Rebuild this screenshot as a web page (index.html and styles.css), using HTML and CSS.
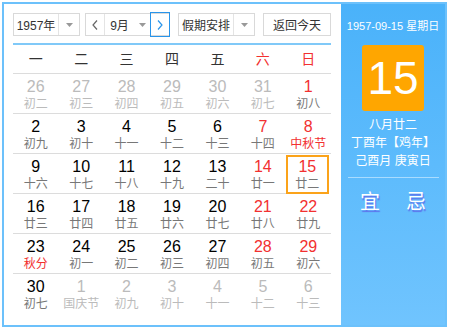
FILE: index.html
```html
<!doctype html>
<html lang="zh-CN">
  <head>
    <meta charset="UTF-8" />
    <meta name="viewport" content="width=device-width, initial-scale=1.0" />
    <title>万年历</title>
    <link rel="stylesheet" href="styles.css">
  </head>
  <body>
    <div class="calendar">
      <!-- Left: toolbar + month grid -->
      <div class="main">
        <div class="toolbar">
          <div class="select year-select">
            <span class="select-text">1957年</span>
            <span class="select-arrow"><svg width="7" height="4" viewBox="0 0 7 4"><path d="M0 0h7L3.5 4z" fill="#999"/></svg></span>
          </div>

          <div class="month-group">
            <span class="nav-btn"><svg width="6" height="10" viewBox="0 0 6 10"><polyline points="5,0.5 1,5 5,9.5" fill="none" stroke="#666" stroke-width="1.2"/></svg></span>
            <div class="month-select">
              <span class="select-text">9月</span>
              <span class="select-arrow"><svg width="7" height="4" viewBox="0 0 7 4"><path d="M0 0h7L3.5 4z" fill="#999"/></svg></span>
            </div>
            <span class="nav-btn nav-next"><svg width="6" height="10" viewBox="0 0 6 10"><polyline points="1,0.5 5,5 1,9.5" fill="none" stroke="#2a95ea" stroke-width="1.2"/></svg></span>
          </div>

          <div class="select holiday-select">
            <span class="select-text">假期安排</span>
            <span class="select-arrow"><svg width="7" height="4" viewBox="0 0 7 4"><path d="M0 0h7L3.5 4z" fill="#999"/></svg></span>
          </div>

          <button class="today-btn">返回今天</button>
        </div>

        <div class="week-head">
          <span>一</span><span>二</span><span>三</span><span>四</span><span>五</span>
          <span class="red">六</span><span class="red">日</span>
        </div>

        <div class="days">
          <div class="day other"><b>26</b><i>初二</i></div>
          <div class="day other"><b>27</b><i>初三</i></div>
          <div class="day other"><b>28</b><i>初四</i></div>
          <div class="day other"><b>29</b><i>初五</i></div>
          <div class="day other"><b>30</b><i>初六</i></div>
          <div class="day other"><b>31</b><i>初七</i></div>
          <div class="day weekend"><b>1</b><i>初八</i></div>

          <div class="day"><b>2</b><i>初九</i></div>
          <div class="day"><b>3</b><i>初十</i></div>
          <div class="day"><b>4</b><i>十一</i></div>
          <div class="day"><b>5</b><i>十二</i></div>
          <div class="day"><b>6</b><i>十三</i></div>
          <div class="day weekend"><b>7</b><i>十四</i></div>
          <div class="day weekend festival"><b>8</b><i>中秋节</i></div>

          <div class="day"><b>9</b><i>十六</i></div>
          <div class="day"><b>10</b><i>十七</i></div>
          <div class="day"><b>11</b><i>十八</i></div>
          <div class="day"><b>12</b><i>十九</i></div>
          <div class="day"><b>13</b><i>二十</i></div>
          <div class="day weekend"><b>14</b><i>廿一</i></div>
          <div class="day weekend selected"><b>15</b><i>廿二</i></div>

          <div class="day"><b>16</b><i>廿三</i></div>
          <div class="day"><b>17</b><i>廿四</i></div>
          <div class="day"><b>18</b><i>廿五</i></div>
          <div class="day"><b>19</b><i>廿六</i></div>
          <div class="day"><b>20</b><i>廿七</i></div>
          <div class="day weekend"><b>21</b><i>廿八</i></div>
          <div class="day weekend"><b>22</b><i>廿九</i></div>

          <div class="day festival"><b>23</b><i>秋分</i></div>
          <div class="day"><b>24</b><i>初一</i></div>
          <div class="day"><b>25</b><i>初二</i></div>
          <div class="day"><b>26</b><i>初三</i></div>
          <div class="day"><b>27</b><i>初四</i></div>
          <div class="day weekend"><b>28</b><i>初五</i></div>
          <div class="day weekend"><b>29</b><i>初六</i></div>

          <div class="day"><b>30</b><i>初七</i></div>
          <div class="day other"><b>1</b><i>国庆节</i></div>
          <div class="day other"><b>2</b><i>初九</i></div>
          <div class="day other"><b>3</b><i>初十</i></div>
          <div class="day other"><b>4</b><i>十一</i></div>
          <div class="day other"><b>5</b><i>十二</i></div>
          <div class="day other"><b>6</b><i>十三</i></div>
        </div>
      </div>

      <!-- Right: selected day detail -->
      <div class="side">
        <div class="side-date">1957-09-15 星期日</div>
        <div class="side-day">15</div>
        <div class="side-lunar">
          <p>八月廿二</p>
          <p>丁酉年【鸡年】</p>
          <p>己酉月 庚寅日</p>
        </div>
        <div class="side-line"></div>
        <div class="side-yiji">
          <span>宜</span><span>忌</span>
        </div>
      </div>
    </div>
  </body>
</html>
```

FILE: styles.css
```css
body {
  margin: 0;
  font-family: "Liberation Sans", "Noto Sans CJK SC", sans-serif;
  background: #fff;
}
.calendar {
  margin: 2px;
  width: 445px;
  height: 325px;
  box-sizing: border-box;
  border: 2px solid #6cc1fb;
  display: flex;
}
.main {
  width: 337px;
  box-sizing: border-box;
  padding: 9px 6px 0 9px;
  background: #fff;
}
.toolbar {
  display: flex;
  align-items: center;
  height: 23px;
  padding-bottom: 7px;
  border-bottom: 2px solid #80c9f8;
  width: 318px;
  font-size: 12px;
  color: #333;
}
.select,
.month-group,
.today-btn {
  height: 23px;
  box-sizing: border-box;
  border: 1px solid #d9d9d9;
  background: #fff;
  display: flex;
  align-items: center;
}
.select-text {
  flex: 1;
  text-align: center;
}
.select-arrow {
  width: 20px;
  height: 100%;
  display: flex;
  align-items: center;
  justify-content: center;
  border-left: 1px solid #e4e4e4;
}
.year-select {
  width: 67px;
}
.month-group {
  width: 85px;
  margin-left: 5px;
}
.nav-btn {
  width: 18px;
  height: 100%;
  display: flex;
  align-items: center;
  justify-content: center;
  border-right: 1px solid #e4e4e4;
}
.nav-next {
  border: 1px solid #2a95ea;
  height: 23px;
  margin: -1px -1px -1px 0;
}
.month-select {
  flex: 1;
  height: 100%;
  display: flex;
  align-items: center;
}
.month-select .select-arrow {
  border-left: none;
  width: 16px;
}
.holiday-select {
  width: 77px;
  margin-left: 8px;
}
.today-btn {
  width: 68px;
  margin-left: 8px;
  justify-content: center;
  font-family: inherit;
  font-size: 12px;
  color: #333;
  padding: 0;
}
.week-head {
  width: 318px;
  display: grid;
  grid-template-columns: repeat(7, 1fr);
  height: 28px;
  line-height: 28px;
  border-bottom: 1px solid #dcdcdc;
  text-align: center;
  font-size: 14px;
  color: #333;
}
.red {
  color: #f23030;
}
.days {
  width: 318px;
  display: grid;
  grid-template-columns: repeat(7, 1fr);
  grid-auto-rows: 40px;
}
.day {
  box-sizing: border-box;
  border-bottom: 1px solid #dcdcdc;
  padding-top: 4px;
  text-align: center;
}
.day:nth-last-child(-n+7) {
  border-bottom: none;
}
.day b {
  display: block;
  font-weight: normal;
  font-size: 16px;
  line-height: 18px;
  color: #000;
}
.day i {
  display: block;
  font-style: normal;
  font-size: 12px;
  line-height: 16px;
  color: #777;
}
.day.weekend b {
  color: #f23030;
}
.day.festival i {
  color: #f23030;
}
.day.other b,
.day.other i {
  color: #bbb;
}
.day.selected {
  border: 2px solid #fba31a;
  margin: 1px 2px 0 0;
  padding-top: 1px;
}
.side {
  flex: 1;
  background: linear-gradient(#4ab2fa, #70c4fe);
  color: #fff;
  text-align: center;
  font-size: 12px;
  display: flex;
  flex-direction: column;
  align-items: center;
}
.side-date {
  margin-top: 14px;
  font-size: 11px;
  line-height: 16px;
}
.side-day {
  margin-top: 11px;
  width: 62px;
  height: 66px;
  border-radius: 3px;
  background: #ffa600;
  font-size: 46px;
  line-height: 66px;
}
.side-lunar {
  margin-top: 5px;
}
.side-lunar p {
  margin: 0;
  line-height: 18px;
}
.side-line {
  margin-top: 7px;
  width: 91px;
  height: 1px;
  background: #a9dcff;
}
.side-yiji {
  margin-top: 12px;
  display: flex;
  gap: 26px;
  font-size: 20px;
  line-height: 24px;
  text-shadow: 1px 2px 1px #5d72ec;
}
```
